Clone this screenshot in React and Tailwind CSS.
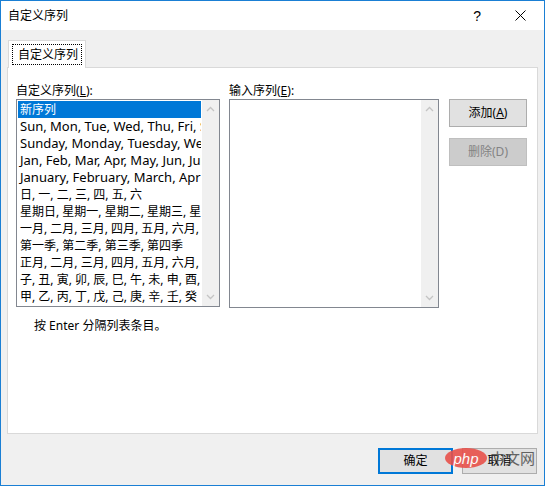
import React from 'react';

const FONT = "font-['Noto_Sans','Noto_Sans_CJK_SC',sans-serif]";

// latin rows render a touch larger, like Segoe UI next to YaHei
const rows = [
  ['Sun, Mon, Tue, Wed, Thu, Fri, Sat', true],
  ['Sunday, Monday, Tuesday, Wednesday, Thursday, Friday, Saturday', true],
  ['Jan, Feb, Mar, Apr, May, Jun, Jul, Aug, Sep, Oct, Nov, Dec', true],
  ['January, February, March, April, May, June, July', true],
  ['日, 一, 二, 三, 四, 五, 六', false],
  ['星期日, 星期一, 星期二, 星期三, 星期四, 星期五, 星期六', false],
  ['一月, 二月, 三月, 四月, 五月, 六月, 七月, 八月', false],
  ['第一季, 第二季, 第三季, 第四季', false],
  ['正月, 二月, 三月, 四月, 五月, 六月, 七月, 八月', false],
  ['子, 丑, 寅, 卯, 辰, 巳, 午, 未, 申, 酉, 戌, 亥', false],
  ['甲, 乙, 丙, 丁, 戊, 己, 庚, 辛, 壬, 癸', false],
];

function Chevron({ up }) {
  return (
    <svg width="9" height="6" viewBox="0 0 9 6" className="block">
      <path
        d={up ? 'M1 5 L4.5 1.5 L8 5' : 'M1 1 L4.5 4.5 L8 1'}
        fill="none"
        stroke="#c4c4c4"
        strokeWidth="1.3"
      />
    </svg>
  );
}

function ScrollBar() {
  return (
    <div className="w-[17px] h-full bg-[#f0f0f0] flex flex-col justify-between items-center py-[6px] shrink-0">
      <Chevron up />
      <Chevron />
    </div>
  );
}

function Button({ children, disabled, primary, className = '' }) {
  const base = disabled
    ? 'bg-[#cccccc] border-[#bfbfbf] text-[#838383] border'
    : primary
    ? 'bg-[#e1e1e1] border-[#0078d7] border-2 text-black'
    : 'bg-[#e1e1e1] border-[#adadad] border text-black';
  return (
    <div className={`flex items-center justify-center text-[12px] ${base} ${className}`}>
      {children}
    </div>
  );
}

export default function App() {
  return (
    <div className={`${FONT} relative w-[545px] h-[486px] border border-[#1a7fd4] bg-[#f0f0f0] flex flex-col text-black`}>
      {/* Title bar */}
      <div className="h-[29px] bg-white flex items-center shrink-0">
        <span className="ml-[7px] text-[12px]">自定义序列</span>
        <span className="ml-auto mr-[34px] text-[14px] leading-none font-['Liberation_Sans',sans-serif]">?</span>
        <svg width="11" height="11" viewBox="0 0 11 11" className="mr-[18px]">
          <path d="M0.5 0.5 L10.5 10.5 M10.5 0.5 L0.5 10.5" stroke="#000" strokeWidth="1" />
        </svg>
      </div>

      {/* Body */}
      <div className="flex-1 flex flex-col px-[6px] pt-[10px]">
        {/* Tab header */}
        <div className="relative z-10 -mb-px ml-[1px] w-[78px] h-[28px] bg-white border border-b-0 border-[#d9d9d9] p-[3px]">
          <div className="h-full border border-dotted border-black flex items-center pl-[5px] text-[12px]">
            自定义序列
          </div>
        </div>

        {/* Tab panel */}
        <div className="h-[367px] bg-white border border-[#d9d9d9] pl-[8px] pt-[14px]">
          <div className="flex">
            {/* Left column */}
            <div className="w-[204px]">
              <div className="h-[17px] leading-[17px] text-[12px]">
                自定义序列(<span className="underline">L</span>):
              </div>
              <div className="h-[208px] border border-[#828790] flex overflow-hidden">
                <div className="flex-1 min-w-0 p-[1px] overflow-hidden">
                  <div className="h-[17px] leading-[17px] bg-[#0078d7] text-white px-[2px] text-[12px] whitespace-nowrap">
                    新序列
                  </div>
                  {rows.map(([r, latin]) => (
                    <div
                      key={r}
                      className={`h-[17px] leading-[17px] px-[2px] whitespace-nowrap overflow-hidden ${latin ? 'text-[13px]' : 'text-[12px]'}`}
                    >
                      {r}
                    </div>
                  ))}
                </div>
                <ScrollBar />
              </div>
            </div>

            {/* Middle column */}
            <div className="w-[210px] ml-[9px]">
              <div className="h-[17px] leading-[17px] text-[12px]">
                输入序列(<span className="underline">E</span>):
              </div>
              <div className="h-[209px] border border-[#828790] flex justify-end">
                <ScrollBar />
              </div>
            </div>

            {/* Right buttons */}
            <div className="ml-[10px] pt-[17px] flex flex-col gap-[11px]">
              <Button className="w-[78px] h-[28px]">
                添加(<span className="underline">A</span>)
              </Button>
              <Button disabled className="w-[78px] h-[28px]">
                删除(D)
              </Button>
            </div>
          </div>

          <div className="mt-[10px] ml-[18px] text-[12px] leading-[16px]">按 Enter 分隔列表条目。</div>
        </div>

        {/* Footer */}
        <div className="flex justify-end gap-[9px] mt-[14px] pr-[1px]">
          <Button primary className="w-[75px] h-[26px]">确定</Button>
          <Button className="w-[75px] h-[26px]">取消</Button>
        </div>
      </div>

      {/* watermark */}
      <div className="absolute left-[444px] top-[446px] flex items-center pointer-events-none">
        <div className="w-[42px] h-[20px] rounded-[50%] bg-[#e8514b] opacity-90 flex items-center justify-center text-white italic text-[15px] leading-none font-['Liberation_Sans',sans-serif]">
          php
        </div>
        <span className="ml-[3px] text-[15px] text-[#444] opacity-80">中文网</span>
      </div>
    </div>
  );
}
